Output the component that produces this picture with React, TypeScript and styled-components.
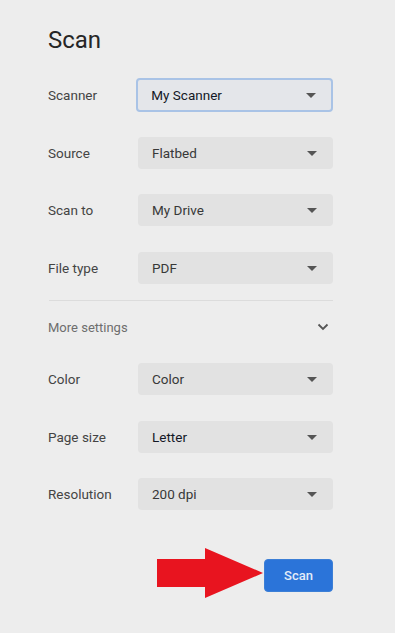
import React from "react";
import styled, { createGlobalStyle } from "styled-components";

const Global = createGlobalStyle`
  html, body { margin: 0; padding: 0; background: #ededed; }
  body { font-family: Roboto, "Liberation Sans", Arial, sans-serif; }
`;

const Page = styled.div`
  width: 395px;
  height: 633px;
  background: #ededed;
  box-sizing: border-box;
  padding: 25px 62px 0 48px;
  display: flex;
  flex-direction: column;
`;

const Title = styled.h1`
  margin: 0;
  font-size: 24px;
  line-height: 30px;
  font-weight: 400;
  color: #262626;
  height: 53px;
`;

const Row = styled.div<{ $gap?: number; $tall?: boolean }>`
  display: flex;
  align-items: center;
  height: ${(p) => (p.$tall ? 34 : 32)}px;
  margin-bottom: ${(p) => p.$gap ?? 25}px;
`;

const Label = styled.div`
  width: 90px;
  font-size: 13.5px;
  color: #444;
`;

const Select = styled.div<{ $focused?: boolean; $dark?: boolean }>`
  width: ${(p) => (p.$focused ? 198 : 195)}px;
  height: ${(p) => (p.$focused ? 34 : 32)}px;
  margin-left: ${(p) => (p.$focused ? -1 : 0)}px;
  box-sizing: border-box;
  border-radius: 4px;
  background: ${(p) => (p.$focused ? "#e4e6ea" : "#e2e2e2")};
  border: ${(p) => (p.$focused ? "2px solid #a9c3e6" : "none")};
  padding: 0 ${(p) => (p.$focused ? 13 : 14)}px;
  display: flex;
  align-items: center;
  justify-content: space-between;
  font-size: 13.5px;
  color: ${(p) => (p.$dark ? "#141826" : "#383838")};
`;

const Caret = styled.span`
  width: 0;
  height: 0;
  border-left: 5px solid transparent;
  border-right: 5px solid transparent;
  border-top: 5px solid #555;
  margin-right: 2px;
`;

const Divider = styled.div`
  height: 1px;
  background: #dcdcdc;
  margin: -9px 0 0 1px;
`;

const MoreRow = styled.div`
  display: flex;
  align-items: center;
  justify-content: space-between;
  height: 52px;
  margin-bottom: 10px;
  font-size: 13px;
  color: #6e6e6e;
`;

const Footer = styled.div`
  margin-top: 24px;
  display: flex;
  justify-content: flex-end;
  align-items: center;
  position: relative;
`;

const ScanButton = styled.button`
  width: 69px;
  height: 33px;
  border: 1px solid #3c7fd6;
  border-radius: 4px;
  background: #2b74d9;
  color: #e3ecf8;
  font-family: Roboto, "Liberation Sans", Arial, sans-serif;
  font-size: 13px;
  font-weight: 500;
  padding: 0;
`;

const Arrow = styled.svg`
  position: absolute;
  left: 109px;
  top: -11px;
`;

const rows1 = [
  { label: "Scanner", value: "My Scanner", focused: true, dark: true, gap: 25 },
  { label: "Source", value: "Flatbed", gap: 25 },
  { label: "Scan to", value: "My Drive", gap: 26 },
  { label: "File type", value: "PDF", gap: 25 },
];

const rows2 = [
  { label: "Color", value: "Color", gap: 26 },
  { label: "Page size", value: "Letter", dark: true, gap: 25 },
  { label: "Resolution", value: "200 dpi", gap: 25 },
];

export default function App() {
  return (
    <>
      <Global />
      <Page>
        <Title>Scan</Title>
        {rows1.map((r) => (
          <Row key={r.label} $gap={r.gap} $tall={r.focused}>
            <Label>{r.label}</Label>
            <Select $focused={r.focused} $dark={r.dark}>
              <span>{r.value}</span>
              <Caret />
            </Select>
          </Row>
        ))}
        <Divider />
        <MoreRow>
          <span>More settings</span>
          <svg width="12" height="8" viewBox="0 0 12 8" style={{ marginRight: 4 }}>
            <path d="M1.5 1.5 L6 6 L10.5 1.5" stroke="#555" strokeWidth="1.8" fill="none" />
          </svg>
        </MoreRow>
        {rows2.map((r) => (
          <Row key={r.label} $gap={r.gap}>
            <Label>{r.label}</Label>
            <Select $dark={r.dark}>
              <span>{r.value}</span>
              <Caret />
            </Select>
          </Row>
        ))}
        <Footer>
          <Arrow width="108" height="52" viewBox="0 0 108 52">
            <polygon points="0,11 48,11 48,0 106,25 48,50 48,39 0,39" fill="#e8141f" />
          </Arrow>
          <ScanButton>Scan</ScanButton>
        </Footer>
      </Page>
    </>
  );
}
